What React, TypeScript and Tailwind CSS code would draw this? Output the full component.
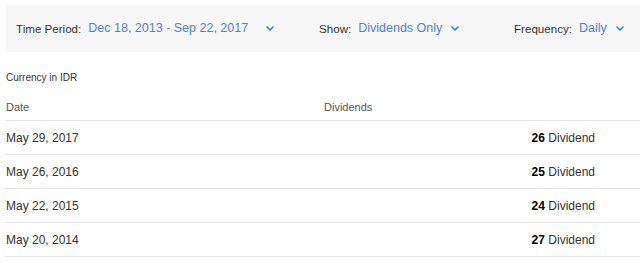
const rows = [
  { date: "May 29, 2017", amount: "26" },
  { date: "May 26, 2016", amount: "25" },
  { date: "May 22, 2015", amount: "24" },
  { date: "May 20, 2014", amount: "27" },
];

function Chevron() {
  return (
    <svg width="8" height="5" viewBox="0 0 8 5" className="shrink-0">
      <path d="M1 1l3 3 3-3" fill="none" stroke="#2f7bf0" strokeWidth="1.6" strokeLinecap="round" strokeLinejoin="round" />
    </svg>
  );
}

function Filter({ label, value, gap, width }: { label: string; value: string; gap: string; width: string }) {
  return (
    <div className={`flex items-center ${width}`}>
      <span className="text-[11.6px] text-[#333]">{label}</span>
      <span className="ml-[7px] text-[12.5px] text-[#4b7ff0]">{value}</span>
      <span className={gap}>
        <Chevron />
      </span>
    </div>
  );
}

export default function App() {
  return (
    <div className="w-[640px] h-[263px] bg-white overflow-hidden pt-[5px] font-['Liberation_Sans',Arial,sans-serif]">
      {/* filters */}
      <div className="ml-[6px] h-[47px] bg-[#f7f7f7] flex items-center pl-[10px]">
        <Filter label="Time Period:" value="Dec 18, 2013 - Sep 22, 2017" gap="ml-[18px]" width="w-[303px]" />
        <Filter label="Show:" value="Dividends Only" gap="ml-[9px]" width="w-[195px]" />
        <Filter label="Frequency:" value="Daily" gap="ml-[9px]" width="" />
      </div>

      <div className="pl-[5px]">
        <div className="mt-[19px] pl-[1px] text-[10px] leading-[14px] text-[#333]">Currency in IDR</div>

        <div className="h-[36px] flex items-end pb-[6px] border-b border-[#e6e6e6] text-[11px] leading-[14px] text-[#555]">
          <div className="w-[319px] pl-[1px]">Date</div>
          <div>Dividends</div>
        </div>

        {rows.map((r) => (
          <div key={r.date} className="h-[34px] flex items-center border-b border-[#e6e6e6] text-[12px] text-[#333]">
            <div className="w-[319px] pl-[1px]">{r.date}</div>
            <div className="flex-1 text-right pr-[45px]">
              <span className="font-bold text-black">{r.amount}</span> Dividend
            </div>
          </div>
        ))}
      </div>
    </div>
  );
}
